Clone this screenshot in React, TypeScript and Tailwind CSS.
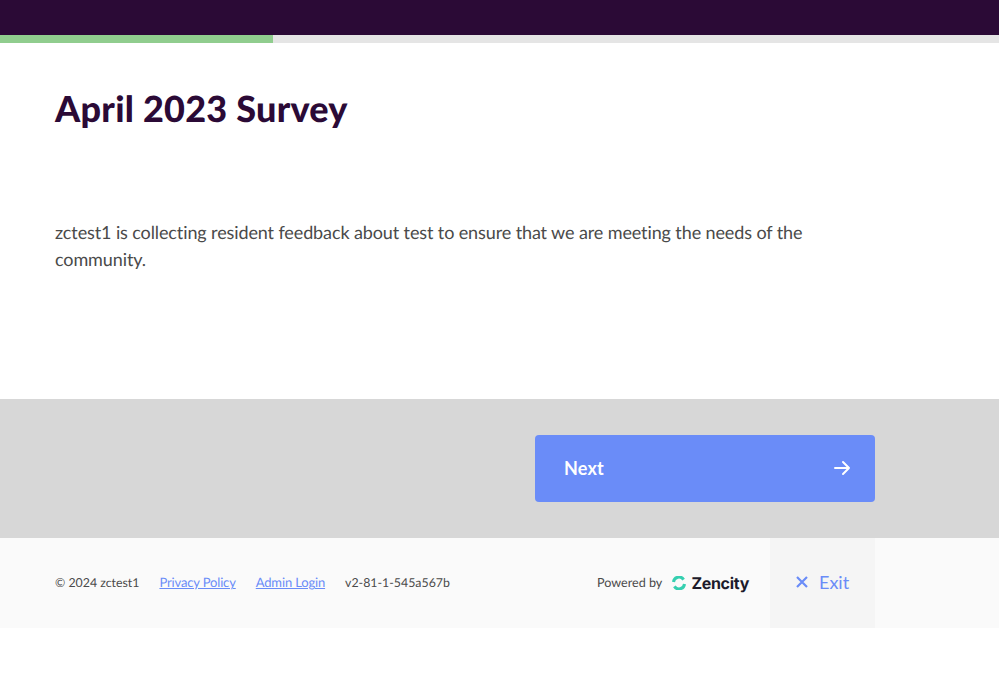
import React from "react";

export default function App() {
  return (
    <div className="min-h-[677px] bg-white font-['Lato',sans-serif] antialiased [text-rendering:geometricPrecision]">
      <div className="h-[35px] bg-[#2b0a36]" />
      <div className="h-2 bg-[#e5e5e5]">
        <div className="h-2 w-[273px] bg-[#90cd8e]" />
      </div>
      <main className="h-[356px] pl-[55px]">
        <h1 className="pt-[41px] text-[36px] leading-[48px] font-black tracking-[0.25px] text-[#2b0a36]">April 2023 Survey</h1>
        <p className="mt-[87px] w-[780px] text-[18px] leading-[27px] tracking-[-0.11px] text-[#4a4a4a]">
          zctest1 is collecting resident feedback about test to ensure that we are meeting the needs of the community.
        </p>
      </main>
      <div className="flex h-[139px] justify-end bg-[#d7d7d7] pr-[124px] pt-9">
        <button className="flex h-[67px] w-[340px] items-center justify-between rounded-[4px] bg-[#6a8cf8] pl-[29px] pr-[24px] text-[18px] font-bold tracking-[0.2px] text-white">
          <span>Next</span>
          <svg className="-translate-y-px" width="18" height="18" viewBox="0 0 18 18" fill="none" stroke="currentColor" strokeWidth="2" strokeLinecap="round" strokeLinejoin="round">
            <path d="M2 9h14M10 3l6 6-6 6" />
          </svg>
        </button>
      </div>
      <footer className="flex h-[90px] items-center bg-[#fafafa] pl-[55px] pr-[124px] text-[12.35px] text-[#4a4a4a]">
        <span>© 2024 zctest1</span>
        <a className="ml-5 text-[13px] tracking-[-0.15px] text-[#6a8cf8] underline">Privacy Policy</a>
        <a className="ml-5 text-[13px] tracking-[-0.15px] text-[#6a8cf8] underline">Admin Login</a>
        <span className="ml-5">v2-81-1-545a567b</span>
        <div className="ml-auto flex items-center">
          <span className="text-[12.6px]">Powered by</span>
          <svg className="ml-[10px]" width="14" height="14" viewBox="0 0 14 14" fill="none" stroke="#35cfb0" strokeWidth="3">
            <path d="M1.5 6A5.5 5.5 0 0 1 11.6 3.6" />
            <path d="M12.5 8A5.5 5.5 0 0 1 2.4 10.4" />
          </svg>
          <span className="ml-[5px] text-[16px] leading-none font-bold tracking-[-0.3px] text-[#1c1b2b] font-['Inter',sans-serif]">Zencity</span>
        </div>
        <button className="ml-[21px] flex h-[90px] w-[105px] items-center bg-[#f5f5f5] pb-[2px] pl-[25px] text-[18px] text-[#6a8cf8]">
          <svg width="14" height="14" viewBox="0 0 14 14" fill="none" stroke="currentColor" strokeWidth="2.2">
            <path d="M2 2l10 10M12 2L2 12" />
          </svg>
          <span className="ml-[10px]">Exit</span>
        </button>
      </footer>
    </div>
  );
}
